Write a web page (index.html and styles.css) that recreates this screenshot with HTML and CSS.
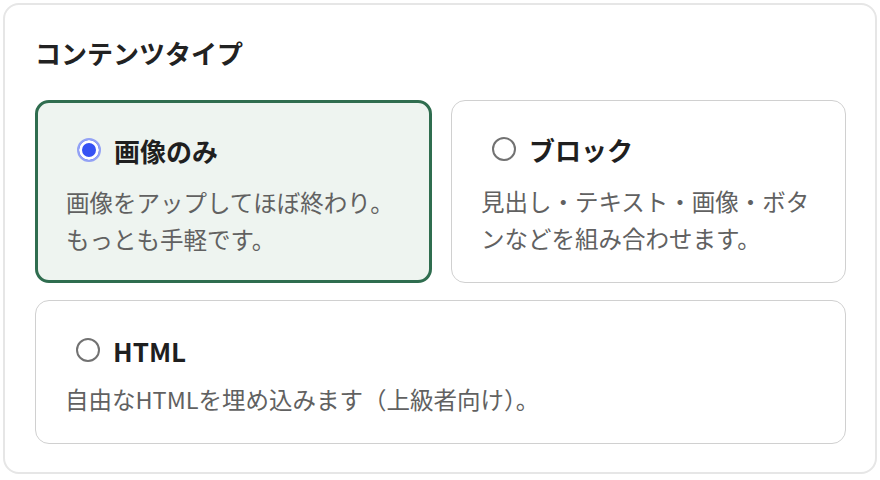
FILE: index.html
```html
<!DOCTYPE html>
<html lang="ja">

<head>
  <meta charset="UTF-8">
  <meta name="viewport" content="width=device-width, initial-scale=1.0" />
  <title>コンテンツタイプ</title>
  <link rel="stylesheet" href="styles.css">
</head>

<body>

  <!-- コンテンツタイプの選択 -->
  <div class="panel">
    <h2 class="panel-title">コンテンツタイプ</h2>
    <div class="options">
      <label class="option selected">
        <span class="option-head">
          <input type="radio" name="contentType" value="image" checked />
          <span class="option-name">画像のみ</span>
        </span>
        <span class="option-desc">画像をアップしてほぼ終わり。もっとも手軽です。</span>
      </label>
      <label class="option">
        <span class="option-head">
          <input type="radio" name="contentType" value="block" />
          <span class="option-name">ブロック</span>
        </span>
        <span class="option-desc">見出し・テキスト・画像・ボタンなどを組み合わせます。</span>
      </label>
      <label class="option wide">
        <span class="option-head">
          <input type="radio" name="contentType" value="html" />
          <span class="option-name">HTML</span>
        </span>
        <span class="option-desc">自由なHTMLを埋め込みます（上級者向け）。</span>
      </label>
    </div>
  </div>

  <script>
    document.querySelectorAll('.option input').forEach(input => {
      input.addEventListener('change', () => {
        document.querySelectorAll('.option').forEach(o => o.classList.remove('selected'));
        input.closest('.option').classList.add('selected');
      });
    });
  </script>
</body>

</html>
```

FILE: styles.css
```css
:root {
  --text-color: #1f1f1f;
  --muted-color: #616161;
  --border-color: #d0d0d0;
  --panel-border: #e6e6e6;
  --accent-green: #2f6d4f;
  --selected-bg: #eef4f0;
  --radio-blue: #3652f4;
  --radio-ring: #93a2f5;
  --font-family: "Noto Sans CJK JP", "Noto Sans", sans-serif;
}

* {
  margin: 0;
  padding: 0;
  box-sizing: border-box;
}

body {
  margin: 3px;
  background: #fff;
  font-family: var(--font-family);
  color: var(--text-color);
}

.panel {
  width: 874px;
  height: 471px;
  border: 2px solid var(--panel-border);
  border-radius: 16px;
  padding: 30px 29px 29px 30px;
}

.panel-title {
  font-size: 26px;
  font-weight: 700;
  line-height: 36px;
  margin-bottom: 29px;
  color: #222;
}

.options {
  display: grid;
  grid-template-columns: 397px 395px;
  column-gap: 19px;
  row-gap: 17px;
}

.option {
  display: flex;
  flex-direction: column;
  border: 1.5px solid var(--border-color);
  border-radius: 14px;
  padding: 28px 22px 23px 29px;
  cursor: pointer;
  background: #fff;
}

.option.selected {
  border: 3px solid var(--accent-green);
  background: var(--selected-bg);
  padding: 27px 21px 22px 28px;
}

.option.wide {
  grid-column: 1 / 3;
  padding-top: 29px;
  padding-bottom: 25px;
}

.option-head {
  display: flex;
  align-items: center;
  height: 40px;
  padding-left: 11px;
}

.option input {
  appearance: none;
  width: 24px;
  height: 24px;
  margin-right: 13px;
  border-radius: 50%;
  border: 2px solid #727272;
  background: #fff;
}

.option input:checked {
  border-color: var(--radio-ring);
  background: var(--radio-blue);
  box-shadow: inset 0 0 0 3px #fff;
}

.option-name {
  font-size: 26px;
  font-weight: 700;
  color: var(--text-color);
}

.option-desc {
  margin-top: 14px;
  font-size: 23.5px;
  line-height: 37px;
  color: var(--muted-color);
}

.option.wide .option-desc {
  margin-top: 11px;
}
```
